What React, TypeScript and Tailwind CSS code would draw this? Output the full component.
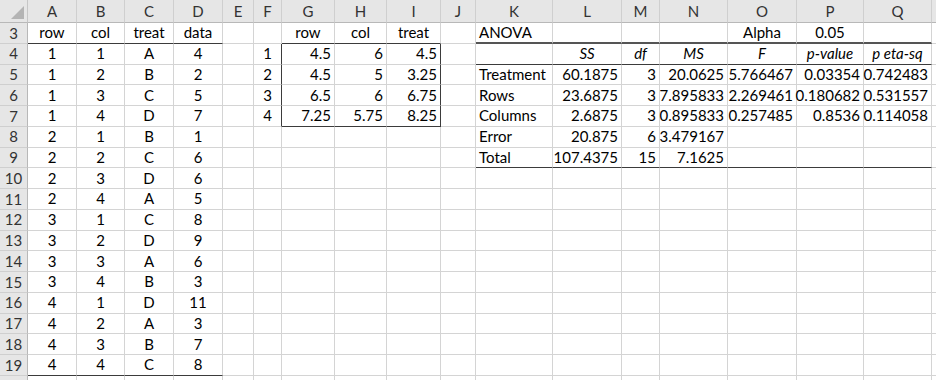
import React from 'react';

type Align = 'l' | 'c' | 'r';
type Cell = { t: string; a: Align; i?: boolean };

const cols = ['A', 'B', 'C', 'D', 'E', 'F', 'G', 'H', 'I', 'J', 'K', 'L', 'M', 'N', 'O', 'P', 'Q', 'R'];
const rows = [3, 4, 5, 6, 7, 8, 9, 10, 11, 12, 13, 14, 15, 16, 17, 18, 19, 20];

const data: Record<string, Cell> = {};
const put = (row: number, start: string, vals: string[], a: Align, i = false) => {
  const s = cols.indexOf(start);
  vals.forEach((v, k) => {
    if (v !== '') data[cols[s + k] + row] = { t: v, a, i };
  });
};

// left block
put(3, 'A', ['row', 'col', 'treat', 'data'], 'c');
const design = [
  ['1', '1', 'A', '4'], ['1', '2', 'B', '2'], ['1', '3', 'C', '5'], ['1', '4', 'D', '7'],
  ['2', '1', 'B', '1'], ['2', '2', 'C', '6'], ['2', '3', 'D', '6'], ['2', '4', 'A', '5'],
  ['3', '1', 'C', '8'], ['3', '2', 'D', '9'], ['3', '3', 'A', '6'], ['3', '4', 'B', '3'],
  ['4', '1', 'D', '11'], ['4', '2', 'A', '3'], ['4', '3', 'B', '7'], ['4', '4', 'C', '8'],
];
design.forEach((r, k) => put(4 + k, 'A', r, 'c'));

// means block
put(3, 'G', ['row', 'col', 'treat'], 'c');
const means = [
  ['4.5', '6', '4.5'], ['4.5', '5', '3.25'], ['6.5', '6', '6.75'], ['7.25', '5.75', '8.25'],
];
means.forEach((r, k) => {
  put(4 + k, 'F', [String(k + 1)], 'c');
  put(4 + k, 'G', r, 'r');
});

// anova block
put(3, 'K', ['ANOVA'], 'l');
put(3, 'O', ['Alpha', '0.05'], 'c');
put(4, 'L', ['SS', 'df', 'MS', 'F', 'p-value', 'p eta-sq'], 'c', true);
const anova = [
  ['Treatment', '60.1875', '3', '20.0625', '5.766467', '0.03354', '0.742483'],
  ['Rows', '23.6875', '3', '7.895833', '2.269461', '0.180682', '0.531557'],
  ['Columns', '2.6875', '3', '0.895833', '0.257485', '0.8536', '0.114058'],
  ['Error', '20.875', '6', '3.479167', '', '', ''],
  ['Total', '107.4375', '15', '7.1625', '', '', ''],
];
anova.forEach((r, k) => {
  put(5 + k, 'K', [r[0]], 'l');
  put(5 + k, 'L', r.slice(1), 'r');
});

const inRange = (c: string, r: number, c1: string, c2: string, r1: number, r2: number) => {
  const i = cols.indexOf(c);
  return i >= cols.indexOf(c1) && i <= cols.indexOf(c2) && r >= r1 && r <= r2;
};

const borderClasses = (c: string, r: number) => {
  let b = 'border-b-[#d4d4d4]';
  let rt = 'border-r-[#d4d4d4]';
  let bw = 'border-b';
  if (inRange(c, r, 'A', 'D', 3, 3) || inRange(c, r, 'A', 'D', 19, 19)) b = 'border-b-[#3b3b3b]';
  if (inRange(c, r, 'G', 'I', 3, 3) || inRange(c, r, 'G', 'I', 7, 7)) b = 'border-b-[#3b3b3b]';
  if (inRange(c, r, 'F', 'F', 4, 7) || inRange(c, r, 'I', 'I', 4, 7)) rt = 'border-r-[#3b3b3b]';
  if (inRange(c, r, 'K', 'Q', 3, 3)) {
    b = 'border-b-[#555555]';
    bw = 'border-b-2';
  }
  if (inRange(c, r, 'K', 'Q', 4, 4) || inRange(c, r, 'K', 'Q', 9, 9)) b = 'border-b-[#3b3b3b]';
  return `${bw} border-r ${b} ${rt}`;
};

const alignClass: Record<Align, string> = {
  l: 'justify-start pl-[3px]',
  c: 'justify-center',
  r: 'justify-end pr-[3px]',
};

export default function App() {
  return (
    <div
      className="h-[380px] w-[936px] overflow-hidden bg-white text-[15px] text-black"
      style={{ fontFamily: 'Lato, "Open Sans", sans-serif' }}
    >
      <div className="grid grid-cols-[28px_49px_48px_49px_49px_31px_28px_53px_52px_54px_35px_77px_69px_38px_68px_69px_67px_68px_60px] grid-rows-[23px_repeat(18,20.76px)]">
        {/* corner */}
        <div className="relative border-b border-r border-b-[#b8b8b8] border-r-[#c6c6c6] bg-[#e6e6e6]">
          <div className="absolute bottom-[3px] right-[3px] h-0 w-0 border-b-[13px] border-l-[13px] border-b-[#b4b4b4] border-l-transparent" />
        </div>
        {cols.map((c) => (
          <div
            key={c}
            className="flex items-center justify-center border-b border-r border-b-[#b8b8b8] border-r-[#cfcfcf] bg-[#e6e6e6] text-[#333]"
          >
            {c === 'R' ? '' : c}
          </div>
        ))}

        {rows.map((r) => (
          <React.Fragment key={r}>
            <div className="flex items-center justify-center border-b border-r border-b-[#cfcfcf] border-r-[#b8b8b8] bg-[#e6e6e6] text-[#333]">
              {r === 20 ? '' : r}
            </div>
            {cols.map((c) => {
              const d = data[c + r];
              return (
                <div
                  key={c + r}
                  className={`flex items-center overflow-visible whitespace-nowrap leading-none ${borderClasses(c, r)} ${d ? alignClass[d.a] : ''} ${d?.i ? 'italic' : ''}`}
                >
                  {d?.t}
                </div>
              );
            })}
          </React.Fragment>
        ))}
      </div>
    </div>
  );
}
